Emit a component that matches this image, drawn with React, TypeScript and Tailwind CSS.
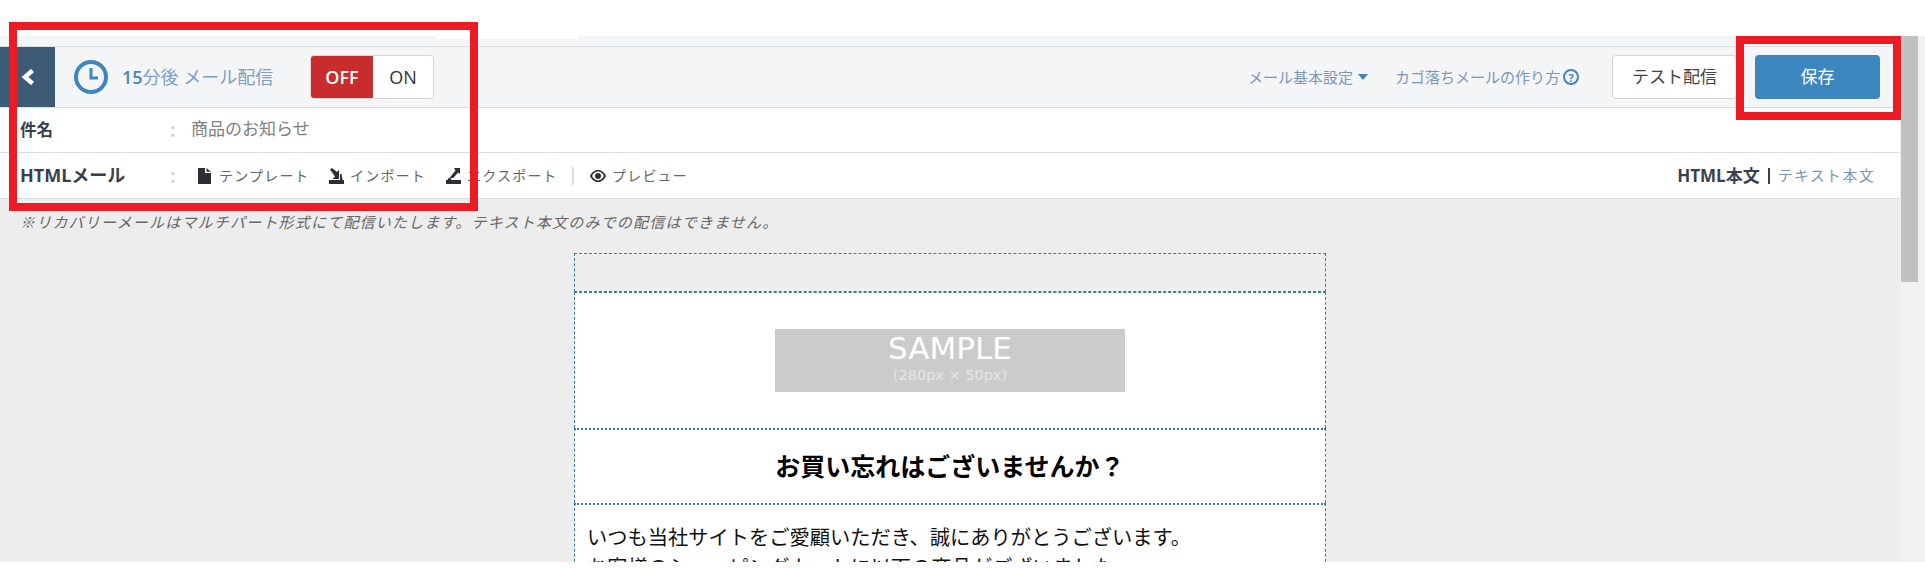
function FileIcon() {
  return (
    <svg width="13" height="16" viewBox="0 0 13 16" className="shrink-0">
      <path d="M0 0h7v5h6v11H0z" fill="#2d2d33" />
      <path d="M8.500 0L13 3.800H8.500z" fill="#2d2d33" />
    </svg>
  );
}

function TrayArrowIcon({ flip }: { flip?: boolean }) {
  return (
    <svg width="15" height="16" viewBox="0 0 15 16" className="shrink-0">
      <path d="M0 12h15v4H0z" fill="#2d2d33" />
      {flip ? (
        <>
          <path d="M2.500 10h2l1 2h-4z" fill="#2d2d33" />
          <path d="M8 0h6v6l-1.800-1.600-5 5.600H3.500l6-7.400z" fill="#2d2d33" />
        </>
      ) : (
        <>
          <path d="M1 1.500L3 0l5 4 2-2.200V11H3.500l2.500-2.600z" fill="#2d2d33" />
          <path d="M11 6h1.500l1 6H11z" fill="#2d2d33" />
        </>
      )}
    </svg>
  );
}

function EyeIcon() {
  return (
    <svg width="16" height="12" viewBox="0 0 16 12" className="shrink-0">
      <path d="M8 0C4.400 0 1.600 2.400 0 6c1.600 3.600 4.400 6 8 6s6.400-2.400 8-6c-1.600-3.600-4.400-6-8-6zm0 1.600c2.400 0 4.600 1.600 6 4.400-1.400 2.800-3.600 4.400-6 4.400S3.400 8.800 2 6c1.400-2.800 3.600-4.400 6-4.400z" fill="#2d2d33" />
      <circle cx="8" cy="6" r="3" fill="#2d2d33" />
    </svg>
  );
}

export default function App() {
  return (
    <div
      className="relative flex h-[568px] w-full flex-col overflow-hidden bg-white text-[#333]"
      style={{ fontFamily: '"Open Sans", "Noto Sans CJK JP", sans-serif' }}
    >
      <div className="h-9 shrink-0 bg-white" />

      <div className="flex min-h-0 flex-1">
        <div className="flex min-w-0 flex-1 flex-col">
          {/* top strip with the white tab */}
          <div className="h-[11px] shrink-0 border-b border-[#dcdde0] bg-[#f4f5f7]">
            <div className="ml-[436px] h-[3px] w-[142px] bg-white" />
          </div>

          {/* header bar */}
          <div className="flex h-[61px] shrink-0 items-center border-b border-[#dcdcdc] bg-[#f4f5f7]">
            <div className="flex h-[60px] w-[55px] items-center justify-center bg-[#3d5b75]">
              <svg width="14" height="16" viewBox="0 0 14 16">
                <path d="M11.500 1.500L4 8l7.500 6.500" fill="none" stroke="#fff" strokeWidth="4.500" />
              </svg>
            </div>
            <svg width="34" height="34" viewBox="0 0 34 34" className="ml-[19px]">
              <circle cx="17" cy="17" r="15" fill="none" stroke="#3d86bf" strokeWidth="4" />
              <path d="M17 8v10h7" fill="none" stroke="#3d86bf" strokeWidth="3" />
            </svg>
            <div className="ml-[14px] w-[188px] text-[18px] text-[#7aa0c6]">
              <span className="font-semibold text-[#4a86b9]">15</span>分後 メール配信
            </div>
            <div className="flex h-[44px] w-[124px] overflow-hidden rounded-[4px] border border-[#d5d5d5] text-[18px]">
              <div className="flex w-[62px] items-center justify-center bg-[#c92c2c] font-semibold text-white">OFF</div>
              <div className="flex flex-1 items-center justify-center bg-white text-[#333]">ON</div>
            </div>

            <div className="ml-auto flex items-center text-[15px] text-[#7b97b8]">
              <span>メール基本設定</span>
              <svg width="10" height="6" viewBox="0 0 10 6" className="ml-[5px]">
                <path d="M0 0h10L5 6z" fill="#3d86bf" />
              </svg>
              <span className="ml-[27px]">カゴ落ちメールの作り方</span>
              <span className="ml-[3px] flex h-[16px] w-[16px] items-center justify-center rounded-full border-2 border-[#3d86bf] text-[11px] font-bold leading-none text-[#3d86bf]">?</span>
            </div>
            <div className="ml-[33px] flex h-[44px] w-[125px] items-center justify-center rounded-[4px] border border-[#d5d5d5] bg-white text-[17px] text-[#444]">
              テスト配信
            </div>
            <div className="ml-[18px] mr-[20px] flex h-[44px] w-[125px] items-center justify-center rounded-[4px] bg-[#3c87c0] text-[17px] text-white">
              保存
            </div>
          </div>

          {/* subject */}
          <div className="flex h-[45px] shrink-0 items-center border-b border-[#dcdcdc] bg-white pl-5">
            <div className="w-[150px] text-[16.500px] font-bold text-[#3a3f4c]">件名</div>
            <div className="w-[21px] text-[20px] font-bold text-[#d4d4d4]">:</div>
            <div className="-mt-[2px] text-[17px] text-[#808080]">商品のお知らせ</div>
          </div>

          {/* html row */}
          <div className="flex h-[46px] shrink-0 items-center border-b border-[#dcdcdc] bg-white pl-5 pr-[25px]">
            <div className="w-[150px] text-[18px] font-bold text-[#3a3f4c]">HTMLメール</div>
            <div className="w-[28px] text-[20px] font-bold text-[#d4d4d4]">:</div>
            <div className="flex items-center text-[14px] tracking-[1.200px] text-[#666]">
              <FileIcon />
              <span className="ml-2 w-[110px]">テンプレート</span>
              <TrayArrowIcon />
              <span className="ml-[6px] w-[96px]">インポート</span>
              <TrayArrowIcon flip />
              <span className="ml-[6px] w-[105px]">エクスポート</span>
              <div className="mr-4 h-[18px] w-[2px] bg-[#dedede]" />
              <EyeIcon />
              <span className="ml-[6px]">プレビュー</span>
            </div>
            <div className="ml-auto flex items-center text-[17px]">
              <span className="font-bold text-[#3a3f4c]">HTML本文</span>
              <span className="mx-[8px] h-[16px] w-[2px] bg-[#3a3f4c]" />
              <span className="text-[15px] tracking-[1.300px] text-[#7b97b8]">テキスト本文</span>
            </div>
          </div>

          {/* editor */}
          <div className="min-h-0 flex-1 overflow-hidden bg-[#ededed] pt-[13px]">
            <p className="pl-5 text-[15px] italic leading-[20px] tracking-[1.200px] text-[#666]">
              ※リカバリーメールはマルチパート形式にて配信いたします。テキスト本文のみでの配信はできません。
            </p>
            <div className="mx-auto mt-[21px] w-[752px]">
              <div className="h-[39px] border border-dashed border-[#2f7f9f] bg-[#eeeeee]" />
              <div className="flex h-[136px] items-center justify-center border-x border-t border-dashed border-[#2f7f9f] bg-white">
                <div className="flex h-[63px] w-[350px] flex-col items-center bg-[#cbcbcb] text-white" style={{ fontFamily: '"DejaVu Sans", sans-serif' }}>
                  <div className="mt-[2px] text-[31px] leading-[35px]">SAMPLE</div>
                  <div className="text-[14.500px] leading-[18px] text-[#e6e6e6]">(280px × 50px)</div>
                </div>
              </div>
              <div className="flex h-[75px] items-center justify-center border-x border-t-2 border-dashed border-[#2f7f9f] bg-white text-[25px] font-bold text-black [border-top-style:dotted]">
                お買い忘れはございませんか？
              </div>
              <div className="border-x border-t-2 border-dashed border-[#2f7f9f] bg-white px-3 pt-[17px] text-[20.250px] leading-[30px] text-[#111] [border-top-style:dotted]">
                <p>いつも当社サイトをご愛顧いただき、誠にありがとうございます。</p>
                <p>お客様のショッピングカートに以下の商品がございました。</p>
              </div>
            </div>
          </div>
        </div>

        {/* scrollbar */}
        <div className="w-[25px] shrink-0 bg-[#f1f1f1] pl-px">
          <div className="h-[246px] w-[17px] bg-[#c1c1c1]" />
        </div>
      </div>

      <div className="h-[6px] shrink-0 bg-white" />

      {/* annotation boxes drawn over the screenshot */}
      <div className="pointer-events-none absolute left-[9px] top-[22px] h-[189px] w-[469px] border-[8px] border-[#ed1c24]" />
      <div className="pointer-events-none absolute left-[1736px] top-9 h-[84px] w-[165px] border-[8px] border-[#ed1c24]" />
    </div>
  );
}
